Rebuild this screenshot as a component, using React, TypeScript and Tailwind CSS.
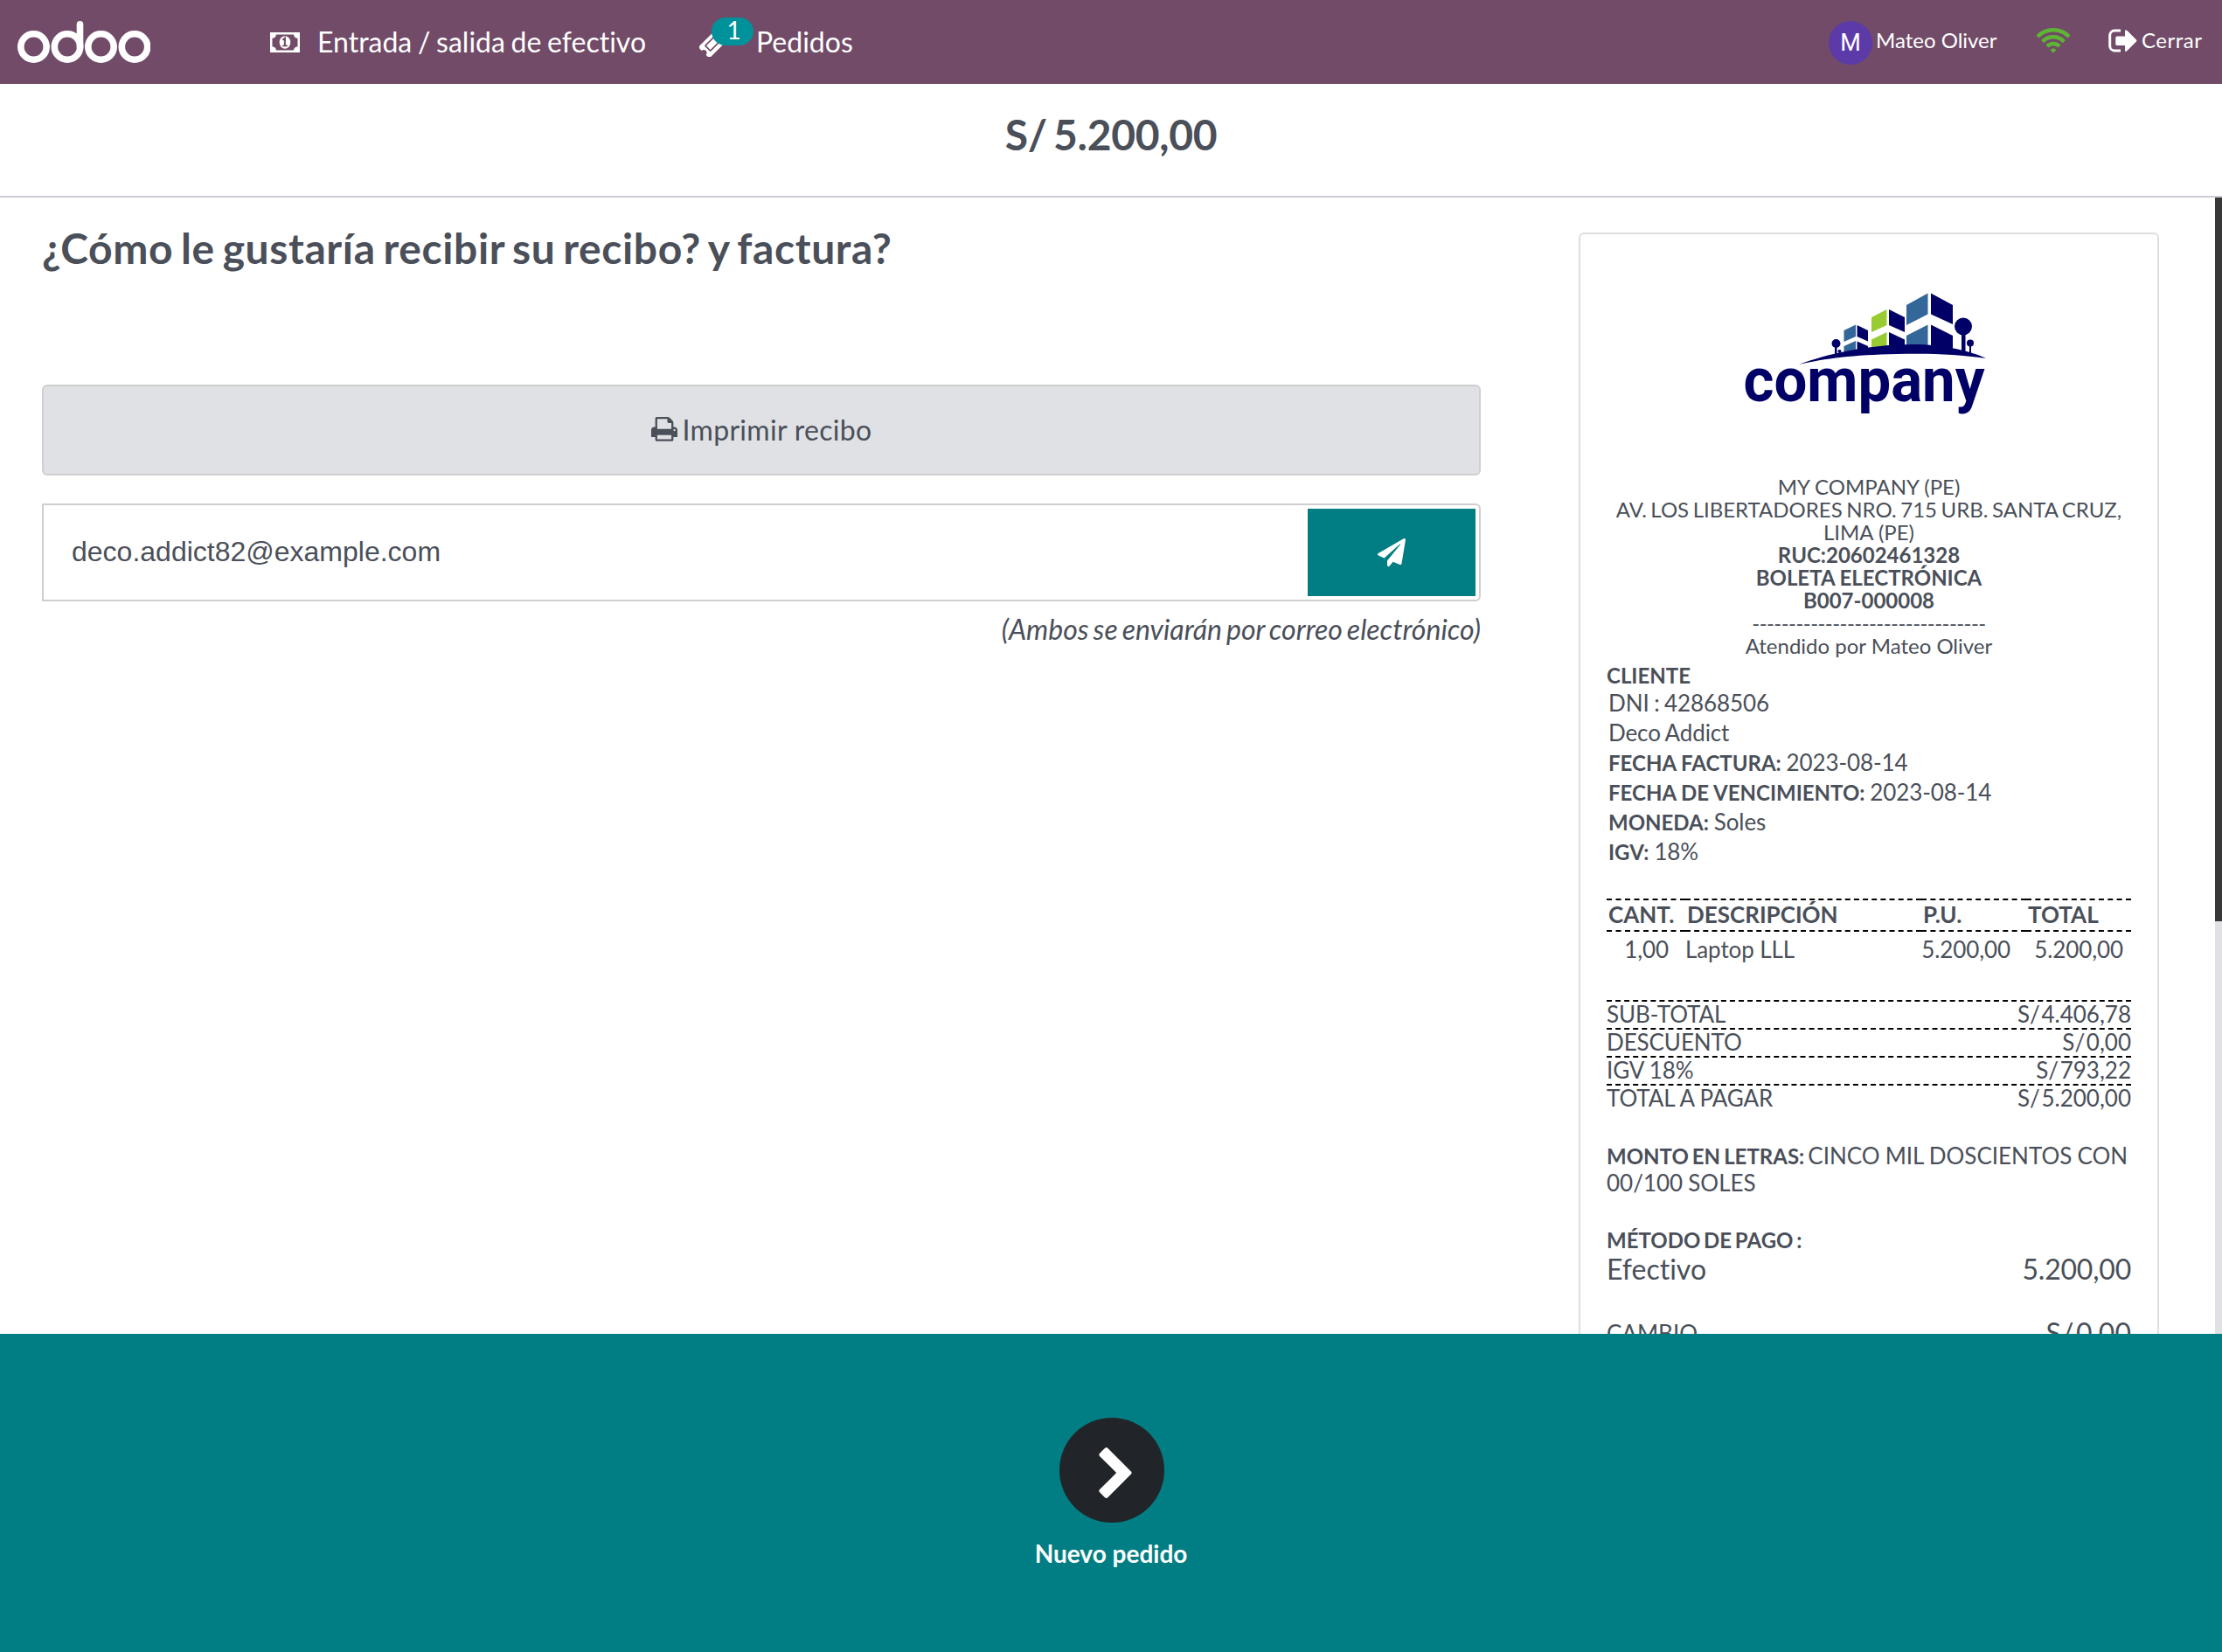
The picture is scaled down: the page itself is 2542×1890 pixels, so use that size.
import React from "react";
import { FaPaperPlane } from "react-icons/fa";

function OdooLogo() {
  return (
    <svg width="152" height="50" viewBox="0 0 152 50" fill="none" stroke="#fff" strokeWidth="7.6">
      <circle cx="18.5" cy="30.5" r="14.7" />
      <circle cx="57" cy="30.5" r="14.7" />
      <circle cx="95.500" cy="30.5" r="14.7" />
      <circle cx="134" cy="30.5" r="14.7" />
      <path d="M71.500 31V4.800" strokeLinecap="round" />
    </svg>
  );
}

function MoneyIcon() {
  return (
    <svg className="mt-px" width="34" height="23" viewBox="0 0 34 24" preserveAspectRatio="none">
      <path
        fill="#fff"
        fillRule="evenodd"
        d="M0 0H34V24H0ZM7 2.5A5 5 0 0 1 2.5 7V17A5 5 0 0 1 7 21.5H27A5 5 0 0 1 31.5 17V7A5 5 0 0 1 27 2.5Z"
      />
      <ellipse cx="17" cy="12" rx="6.3" ry="7.6" fill="#fff" />
      <path d="M14.4 9.2L16.9 7V16M14.2 16H19.8" fill="none" stroke="#714B67" strokeWidth="2" />
    </svg>
  );
}

function TicketIcon() {
  return (
    <svg className="mt-[3px]" width="30" height="30" viewBox="0 0 1664 1664" fill="#fff">
      <path d="M960 448l256 256-512 512-256-256zM749 1306l557-557q19-19 19-45t-19-45l-301-301q-18-18-45-18t-45 18l-557 557q-19 19-19 45t19 45l301 301q18 18 45 18t45-18zM1636 760l-907 908q-37 37-90.500 37t-90.500-37l-126-126q56-56 56-136t-56-136-136-56-136 56l-125-126q-37-37-37-90.500t37-90.500l907-906q37-37 90.500-37t90.500 37l125 125q-56 56-56 136t56 136 136 56 136-56l126 125q37 37 37 90.500t-37 90.500z" />
    </svg>
  );
}

function PrintIcon() {
  return (
    <svg width="30" height="30" viewBox="0 0 1664 1664" fill="#4a4f59">
      <path d="M384 1408h896v-256h-896v256zM384 768h896v-384h-160q-40 0-68-28t-28-68v-160h-640v640zM1536 832q0-26-19-45t-45-19-45 19-19 45 19 45 45 19 45-19 19-45zM1664 832v416q0 13-9.500 22.500t-22.500 9.500h-224v160q0 40-28 68t-68 28h-960q-40 0-68-28t-28-68v-160h-224q-13 0-22.500-9.500t-9.500-22.500v-416q0-79 56.500-135.500t135.500-56.500h64v-544q0-40 28-68t68-28h672q40 0 88 20t76 48l152 152q28 28 48 76t20 88v256h64q79 0 135.500 56.500t56.500 135.500z" />
    </svg>
  );
}

function WifiIcon() {
  return (
    <svg width="40" height="29" viewBox="0 0 40 29">
      <g fill="none" stroke="#5DB533" strokeWidth="4.5">
        <path d="M2 10A25 25 0 0 1 38 10" />
        <path d="M7.700 15.600A17 17 0 0 1 32.300 15.600" />
        <path d="M13 21A9.800 9.800 0 0 1 27 21" />
      </g>
      <path d="M16.500 25Q20 22.200 23.500 25L20 28.800Z" fill="#5DB533" />
    </svg>
  );
}

function SignOutIcon() {
  return (
    <svg width="33" height="28" viewBox="0 0 33 28">
      <path d="M14 2H7A5.500 5.500 0 0 0 1.700 7.500V19.500A5.500 5.500 0 0 0 7 25H14" fill="none" stroke="#fff" strokeWidth="3" />
      <path d="M10 8.500H19V3Q19 0 21.500 2L32 12.500Q33 13.500 32 14.500L21.500 25Q19 27 19 24.500V19H10Q8.300 19 8.300 17.500V10Q8.300 8.500 10 8.500Z" fill="#fff" />
    </svg>
  );
}

function ChevronIcon() {
  return (
    <svg className="ml-[8px] mt-[6px]" width="38" height="58" viewBox="90 -192 1036 1612" fill="#fff">
      <path d="M1107 659l-742 742q-19 19-45 19t-45-19l-166-166q-19-19-19-45t19-45l531-531-531-531q-19-19-19-45t19-45l166-166q19-19 45-19t45 19l742 742q19 19 19 45t-19 45z" />
    </svg>
  );
}

function CompanyLogo() {
  return (
    <svg width="310" height="170" viewBox="0 0 310 170">
      <g fill="#336699">
        <path d="M201 29L225.500 15.500V39.500L201 52Z" />
        <path d="M201 64L225.500 51.500V76H201Z" />
        <path d="M129.500 58L143 51.500V65L129.500 71Z" />
        <path d="M129.500 76L143 70V84H129.500Z" />
      </g>
      <g fill="#99CC33">
        <path d="M161 43L178.500 34V52L161 60Z" />
        <path d="M161 68.500L178.500 60V78H161Z" />
      </g>
      <g fill="#000066">
        <path d="M229 15.500L254 29V51L229 39.500Z" />
        <path d="M229 51.500L254 64V80H229Z" />
        <path d="M181 34L199 43V60L181 52Z" />
        <path d="M181 60L199 68.500V80H181Z" />
        <path d="M144.500 52L157 58V70.500L144.500 65Z" />
        <path d="M144.500 70.500L157 76V84H144.500Z" />
        <path d="M78 97C110 85 158 74 208 74C244 74 276 82 292 90C260 85 225 84 190 85C140 86 108 90 78 97Z" />
        <circle cx="266" cy="53.500" r="10" />
        <path d="M264 60H268.500V82H264Z" />
        <circle cx="274" cy="72.500" r="4" />
        <path d="M273 74H275V84H273Z" />
        <circle cx="120.500" cy="73" r="5" />
        <path d="M119 75H121.500V87H119Z" />
        <circle cx="124.500" cy="82" r="2" />
      </g>
      <text
        x="14.5"
        y="138.500"
        textLength="276"
        lengthAdjust="spacingAndGlyphs"
        fontFamily="Roboto, sans-serif"
        fontWeight="700"
        fontSize="71"
        fill="#000066"
      >
        company
      </text>
    </svg>
  );
}

const totals = [
  ["SUB-TOTAL", "S/ 4.406,78"],
  ["DESCUENTO", "S/ 0,00"],
  ["IGV 18%", "S/ 793,22"],
  ["TOTAL A PAGAR", "S/ 5.200,00"],
];

const details = [
  ["", "DNI : 42868506"],
  ["", "Deco Addict"],
  ["FECHA FACTURA:", "2023-08-14"],
  ["FECHA DE VENCIMIENTO:", "2023-08-14"],
  ["MONEDA:", "Soles"],
  ["IGV:", "18%"],
];

const headings = ["CANT.", "DESCRIPCIÓN", "P.U.", "TOTAL"];

function Receipt() {
  return (
    <div className="h-[1400px] w-[664px] shrink-0 rounded-[6px] border-2 border-[#dedede] px-[30px] text-[26px] leading-[30px]">
      <div className="flex justify-center pt-[52px] h-[276px]">
        <div className="ml-[-7px]">
          <CompanyLogo />
        </div>
      </div>
      <div className="text-center text-[24px] leading-[26px]">
        <div>MY COMPANY (PE)</div>
        <div className="[word-spacing:-1.6px]">AV. LOS LIBERTADORES NRO. 715 URB. SANTA CRUZ,</div>
        <div>LIMA (PE)</div>
        <div className="font-bold">RUC:20602461328</div>
        <div className="font-bold">BOLETA ELECTRÓNICA</div>
        <div className="font-bold">B007-000008</div>
        <div className="tracking-[-0.56px]">--------------------------------</div>
        <div>Atendido por Mateo Oliver</div>
      </div>
      <div className="mt-[6px] text-[24px] font-bold leading-[30px]">CLIENTE</div>
      <div className="pl-[2px]">
        {details.map(([label, value]) => (
          <div key={label + value} className="h-[34px] leading-[32px]">
            {label && <b className="text-[24px]">{label} </b>}
            <span className="tracking-[-0.1px] [word-spacing:-1px]">{value}</span>
          </div>
        ))}
      </div>
      <div className="mt-[36px] grid h-[38px] grid-cols-[90px_270px_120px_1fr] font-bold leading-[32px]">
        {headings.map((h) => (
          <div key={h} className="border-y-2 border-dashed border-black pl-[2px]">
            {h}
          </div>
        ))}
      </div>
      <div className="flex h-[78px] leading-[40px] tracking-[-0.1px]">
        <div className="w-[71px] text-right">1,00</div>
        <div className="ml-[19px] flex-1">Laptop LLL</div>
        <div className="w-[140px] text-right">5.200,00</div>
        <div className="w-[138px] pr-[9px] text-right">5.200,00</div>
      </div>
      {totals.map(([label, value]) => (
        <div key={label} className="flex h-[32px] justify-between border-t-2 border-dashed border-black leading-[28px]">
          <span className="tracking-[-0.1px]">{label}</span>
          <span className="[word-spacing:-5px]">{value}</span>
        </div>
      ))}
      <div className="mt-[35px] [word-spacing:-0.6px]">
        <b className="text-[24px] [word-spacing:-1.8px]">MONTO EN LETRAS: </b>CINCO MIL DOSCIENTOS CON 00/100 SOLES
      </div>
      <div className="mt-[36px] text-[24px] font-bold [word-spacing:-2.1px]">MÉTODO DE PAGO :</div>
      <div className="mt-[-1px] flex justify-between text-[32px] leading-[38px]">
        <span>Efectivo</span>
        <span className="tracking-[-0.2px]">5.200,00</span>
      </div>
      <div className="mt-[35px] flex justify-between leading-[38px]">
        <span>CAMBIO</span>
        <span className="text-[32px] [word-spacing:-5.5px]">S/ 0,00</span>
      </div>
    </div>
  );
}

export default function App() {
  return (
    <div className="flex h-[1890px] w-[2542px] flex-col overflow-hidden bg-white font-['Lato',sans-serif] text-[#4a4f59] [font-variant-ligatures:none]">
      <header className="flex h-[96px] shrink-0 items-center bg-[#714B67] text-white">
        <div className="ml-[20px] w-[289px]">
          <OdooLogo />
        </div>
        <MoneyIcon />
        <span className="ml-[20px] w-[376px] whitespace-nowrap text-[32px] [word-spacing:-1.5px]">
          Entrada / salida de efectivo
        </span>
        <div className="relative ml-[61px] w-[65px]">
          <TicketIcon />
          <span className="absolute left-[14px] top-[-12px] flex h-[32px] w-[48px] items-center justify-center rounded-full bg-[#00929a] pb-[4px] pl-[3px] text-[28px] leading-[28px]">
            1
          </span>
        </div>
        <span className="text-[32px]">Pedidos</span>
        <div className="ml-auto flex items-center">
          <div className="mt-[2px] flex h-[50px] w-[50px] items-center justify-center rounded-full bg-[#5c3aa8] font-['Roboto',sans-serif] text-[27px]">
            M
          </div>
          <span className="mb-[4px] ml-[4px] w-[140px] whitespace-nowrap text-[24px]">Mateo Oliver</span>
          <div className="mb-[4px] ml-[43px]">
            <WifiIcon />
          </div>
          <div className="mb-[2px] ml-[43px]">
            <SignOutIcon />
          </div>
          <span className="mb-[4px] ml-[5px] w-[92px] text-[24px] tracking-[0.5px]">Cerrar</span>
        </div>
      </header>
      <div className="flex h-[130px] shrink-0 justify-center border-b-2 border-[#c9ccd2] pt-[28px] text-[48px] font-bold leading-[60px] tracking-[-0.3px] [word-spacing:-4px]">
        S/ 5.200,00
      </div>
      <main className="flex h-[1300px] shrink-0 overflow-hidden">
        <section className="w-[1694px] pl-[48px] pt-[28px]">
          <h1 className="h-[186px] text-[48px] font-bold leading-[60px] tracking-[0.6px] [word-spacing:-3.4px]">
            ¿Cómo le gustaría recibir su recibo? y factura?
          </h1>
          <button className="flex h-[104px] w-full items-center justify-center gap-[6px] rounded-[6px] border-2 border-[#cfcfcf] bg-[#e0e1e5] text-[32px] tracking-[0.3px]">
            <PrintIcon />
            Imprimir recibo
          </button>
          <div className="mt-[32px] flex h-[112px] items-center justify-between rounded-r-[6px] border-2 border-[#cfcfcf] pl-[32px] pr-[4px]">
            <span className="mb-[2px] font-['Liberation_Sans',sans-serif] text-[32px]">deco.addict82@example.com</span>
            <div className="flex h-[100px] w-[192px] items-center justify-center bg-[#017e84]">
              <FaPaperPlane className="h-[32px] w-[32px] text-white" />
            </div>
          </div>
          <div className="mt-[12px] text-right text-[32px] italic leading-[40px] [word-spacing:-2.5px]">
            (Ambos se enviarán por correo electrónico)
          </div>
        </section>
        <section className="flex flex-1 justify-end pr-[64px] pt-[40px]">
          <Receipt />
        </section>
        <div className="w-[8px] bg-[#e0e1e5]">
          <div className="h-[828px] bg-[#383838]" />
        </div>
      </main>
      <footer className="flex flex-1 flex-col items-center bg-[#017e84] pt-[96px] text-white">
        <div className="ml-[2px] flex h-[120px] w-[120px] items-center justify-center rounded-full bg-[#212529]">
          <ChevronIcon />
        </div>
        <div className="mt-[16px] text-[28px] font-bold leading-[38px]">Nuevo pedido</div>
      </footer>
    </div>
  );
}
